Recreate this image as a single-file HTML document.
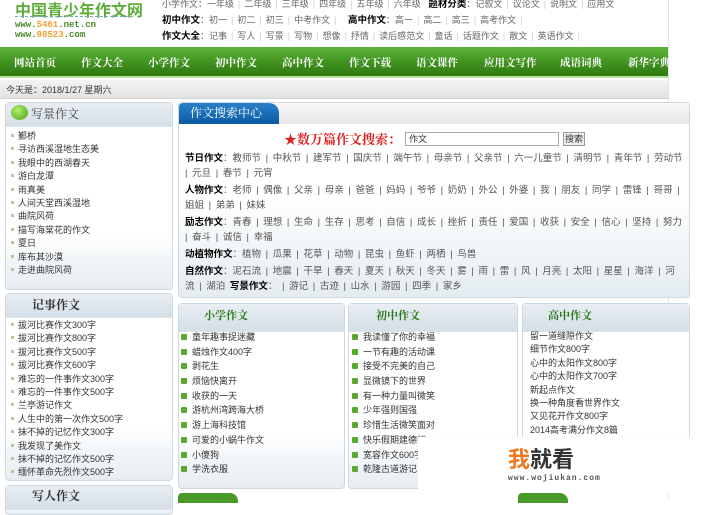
<!DOCTYPE html>
<html><head><meta charset="utf-8">
<style>
*{margin:0;padding:0;box-sizing:border-box}
body{width:713px;height:500px;overflow:hidden;background:#fff;font-family:"Liberation Sans","Noto Sans CJK SC",sans-serif;font-size:9px;color:#333;position:relative}
.a{position:absolute;white-space:nowrap}
.nav{left:0;top:47px;width:668px;height:31px;background:linear-gradient(#5fb33a,#3d8e1c 60%,#2f7a12);border-bottom:2px solid #b8e0a0;overflow:hidden}
.nav span{position:absolute;top:8px;color:#fff;font-weight:bold;font-size:10.5px;font-family:"Liberation Serif","Noto Serif CJK SC",serif}
.hd{font-size:9px;color:#666}
.hd b{color:#000;font-size:9.5px}
.hd i{font-style:normal;color:#ccc;margin:0 4px}
.box{border:1px solid #cdd8e0;border-radius:4px;background:linear-gradient(#fff 70%,#e6edf2)}
.bh{height:24px;background:linear-gradient(#e8eef3,#d5dfe7);border-bottom:1px solid #dde5eb}
.list div{height:13.4px;line-height:13.4px;font-size:9px;color:#333}
.list div:before{content:"";display:inline-block;width:3px;height:3px;background:#b8c89a;margin:0 4px 2px 1px}
.gl div{height:14.7px;line-height:14.7px;font-size:9px;color:#333}
.gl div:before{content:"";display:inline-block;width:6px;height:6px;background:#5aa832;border-radius:1px;margin:0 5px 0 5px;vertical-align:-0px}
.sr{font-size:9.5px;color:#555;line-height:15px;word-spacing:2px}
.sr b{color:#000;word-spacing:0}
</style></head><body>
<div class="a" style="left:15px;top:-3px;font-size:16px;font-weight:bold;color:#5fae3b;font-family:'Noto Sans CJK SC',sans-serif">中国青少年作文网</div>
<div class="a" style="left:15px;top:16px;width:118px;border-top:1px dashed #7ab;"></div>
<div class="a" style="left:15px;top:20px;font-size:9px;font-weight:bold;color:#4a8a2a;font-family:'Liberation Mono',monospace;line-height:10px">www.<span style="color:#f0a030">5461</span>.net.cn<br>www.<span style="color:#f0a030">98523</span>.com</div>
<div class="a hd" style="left:162px;top:-4px">小学作文：一年级<i>|</i>二年级<i>|</i>三年级<i>|</i>四年级<i>|</i>五年级<i>|</i>六年级 &nbsp; <b>题材分类</b>：记叙文<i>|</i>议论文<i>|</i>说明文<i>|</i>应用文</div>
<div class="a hd" style="left:162px;top:12px"><b>初中作文</b>：初一<i>|</i>初二<i>|</i>初三<i>|</i>中考作文<i>|</i> &nbsp; <b>高中作文</b>：高一<i>|</i>高二<i>|</i>高三<i>|</i>高考作文<i>|</i></div>
<div class="a hd" style="left:162px;top:28px"><b>作文大全</b>：记事<i>|</i>写人<i>|</i>写景<i>|</i>写物<i>|</i>想像<i>|</i>抒情<i>|</i>读后感范文<i>|</i>童话<i>|</i>话题作文<i>|</i>散文<i>|</i>英语作文<i>|</i></div>
<div class="a" style="left:668px;top:0;width:1px;height:500px;background:#e4e4e4"></div>
<div class="a nav"><span style="left:14px">网站首页</span><span style="left:81px">作文大全</span><span style="left:148px">小学作文</span><span style="left:215px">初中作文</span><span style="left:282px">高中作文</span><span style="left:349px">作文下载</span><span style="left:416px">语文课件</span><span style="left:484px">应用文写作</span><span style="left:560px">成语词典</span><span style="left:628px">新华字典</span></div>
<div class="a" style="left:0;top:80px;width:668px;height:19px;background:linear-gradient(#f4f4f4,#e2e2e2);border-bottom:1px solid #d5d5d5"></div>
<div class="a" style="left:6px;top:83px;font-size:9px;color:#333">今天是：2018/1/27 星期六</div>

<div class="a box" style="left:5px;top:102px;width:168px;height:188px"><div class="bh"></div></div>
<div class="a" style="left:11px;top:105px;width:17px;height:15px;border-radius:50%;background:radial-gradient(circle at 40% 35%,#b6f070,#44a010)"></div>
<div class="a" style="left:31px;top:105px;font-size:12px;color:#444;font-family:'Noto Serif CJK SC',serif">写景作文</div>
<div class="a list" style="left:10px;top:130px"><div>鄞桥</div><div>寻访西溪湿地生态美</div><div>我眼中的西湖春天</div><div>游白龙潭</div><div>雨真美</div><div>人间天堂西溪湿地</div><div>曲院风荷</div><div>描写海棠花的作文</div><div>夏日</div><div>库布其沙漠</div><div>走进曲院风荷</div></div>

<div class="a box" style="left:5px;top:293px;width:168px;height:188px"><div class="bh"></div></div>
<div class="a" style="left:32px;top:296px;font-size:12px;font-weight:bold;color:#333;font-family:'Noto Serif CJK SC',serif">记事作文</div>
<div class="a list" style="left:10px;top:319px"><div>拔河比赛作文300字</div><div>拔河比赛作文800字</div><div>拔河比赛作文500字</div><div>拔河比赛作文600字</div><div>难忘的一件事作文300字</div><div>难忘的一件事作文500字</div><div>兰亭游记作文</div><div>人生中的第一次作文500字</div><div>抹不掉的记忆作文300字</div><div>我发现了美作文</div><div>抹不掉的记忆作文500字</div><div>缅怀革命先烈作文500字</div></div>
<div class="a box" style="left:5px;top:485px;width:168px;height:30px"><div class="bh"></div></div>
<div class="a" style="left:32px;top:487px;font-size:12px;font-weight:bold;color:#333;font-family:'Noto Serif CJK SC',serif">写人作文</div>

<div class="a box" style="left:178px;top:102px;width:512px;height:196px;background:linear-gradient(#fff 50%,#e4ecf1)"></div>
<div class="a" style="left:179px;top:103px;width:510px;height:21px;background:linear-gradient(#fafafa,#e6e6e6);border-radius:4px 4px 0 0"></div>
<div class="a" style="left:179px;top:103px;width:100px;height:21px;background:linear-gradient(#2a80c8,#0b5aa5);border-radius:4px 10px 0 0"></div>
<div class="a" style="left:190px;top:104px;font-size:12px;color:#fff;font-family:'Noto Serif CJK SC',serif">作文搜索中心</div>
<div class="a" style="left:284px;top:129px;font-size:13px;font-weight:bold;color:#d22;font-family:'Noto Serif CJK SC',serif">★数万篇作文搜索：</div>
<div class="a" style="left:405px;top:132px;width:154px;height:14px;border:1px solid #aaa;font-size:9px;padding-left:3px;line-height:12px">作文</div>
<div class="a" style="left:563px;top:132px;width:22px;height:14px;border:1px solid #999;background:#eee;font-size:9px;text-align:center;line-height:12px">搜索</div>
<div class="a sr" style="left:185px;top:151px;width:498px;white-space:normal"><b>节日作文</b>：教师节 | 中秋节 | 建军节 | 国庆节 | 端午节 | 母亲节 | 父亲节 | 六一儿童节 | 清明节 | 青年节 | 劳动节 | 元旦 | 春节 | 元宵</div>
<div class="a sr" style="left:185px;top:183px;width:498px;white-space:normal"><b>人物作文</b>：老师 | 偶像 | 父亲 | 母亲 | 爸爸 | 妈妈 | 爷爷 | 奶奶 | 外公 | 外婆 | 我 | 朋友 | 同学 | 雷锋 | 哥哥 | 姐姐 | 弟弟 | 妹妹</div>
<div class="a sr" style="left:185px;top:215px;width:498px;white-space:normal"><b>励志作文</b>：青春 | 理想 | 生命 | 生存 | 思考 | 自信 | 成长 | 挫折 | 责任 | 爱国 | 收获 | 安全 | 信心 | 坚持 | 努力 | 奋斗 | 诚信 | 幸福</div>
<div class="a sr" style="left:185px;top:247px"><b>动植物作文</b>：植物 | 瓜果 | 花草 | 动物 | 昆虫 | 鱼虾 | 两栖 | 鸟兽</div>
<div class="a sr" style="left:185px;top:264px;width:498px;white-space:normal"><b>自然作文</b>：泥石流 | 地震 | 干旱 | 春天 | 夏天 | 秋天 | 冬天 | 雾 | 雨 | 雷 | 风 | 月亮 | 太阳 | 星星 | 海洋 | 河流 | 湖泊 <b>写景作文</b>： | 游记 | 古迹 | 山水 | 游园 | 四季 | 家乡</div>

<div class="a box" style="left:178px;top:303px;width:167px;height:186px"><div class="bh" style="height:28px"></div></div>
<div class="a box" style="left:348px;top:303px;width:170px;height:186px"><div class="bh" style="height:28px"></div></div>
<div class="a box" style="left:522px;top:303px;width:168px;height:186px"><div class="bh" style="height:28px"></div></div>
<div class="a" style="left:204px;top:307px;font-size:11px;font-weight:bold;color:#2a7a1a;font-family:'Noto Serif CJK SC',serif">小学作文</div>
<div class="a" style="left:376px;top:307px;font-size:11px;font-weight:bold;color:#2a7a1a;font-family:'Noto Serif CJK SC',serif">初中作文</div>
<div class="a" style="left:548px;top:307px;font-size:11px;font-weight:bold;color:#2a7a1a;font-family:'Noto Serif CJK SC',serif">高中作文</div>
<div class="a gl" style="left:176px;top:330px"><div>童年趣事捉迷藏</div><div>蜡烛作文400字</div><div>剥花生</div><div>烦恼快离开</div><div>收获的一天</div><div>游杭州湾跨海大桥</div><div>游上海科技馆</div><div>可爱的小蜗牛作文</div><div>小傻狗</div><div>学洗衣服</div></div>
<div class="a gl" style="left:347px;top:330px"><div>我读懂了你的幸福</div><div>一节有趣的活动课</div><div>接受不完美的自己</div><div>显微镜下的世界</div><div>有一种力量叫微笑</div><div>少年强则国强</div><div>珍惜生活微笑面对</div><div>快乐假期建德行</div><div>宽容作文600字</div><div>乾隆古道游记</div></div>
<div class="a" style="left:530px;top:330px;font-size:9px;line-height:13.4px;color:#333">留一道缝隙作文<br>细节作文800字<br>心中的太阳作文800字<br>心中的太阳作文700字<br>新起点作文<br>换一种角度看世界作文<br>又见花开作文800字<br>2014高考满分作文8篇</div>
<div class="a" style="left:178px;top:493px;width:60px;height:10px;background:#4a9a2a;border-radius:4px 8px 0 0"></div>
<div class="a" style="left:518px;top:493px;width:50px;height:10px;background:#4a9a2a;border-radius:4px 8px 0 0"></div>

<div class="a" style="left:418px;top:437px;width:295px;height:56px;background:#fff"></div>
<div class="a" style="left:508px;top:445px;font-size:22px;font-weight:bold;color:#f07a20;font-family:'Noto Sans CJK SC',sans-serif;line-height:26px">我<span style="color:#333">就看</span></div>
<div class="a" style="left:508px;top:474px;font-size:8px;font-weight:bold;color:#555;font-family:'Liberation Mono',monospace;letter-spacing:1px">www.wojiukan.com</div>
</body></html>
